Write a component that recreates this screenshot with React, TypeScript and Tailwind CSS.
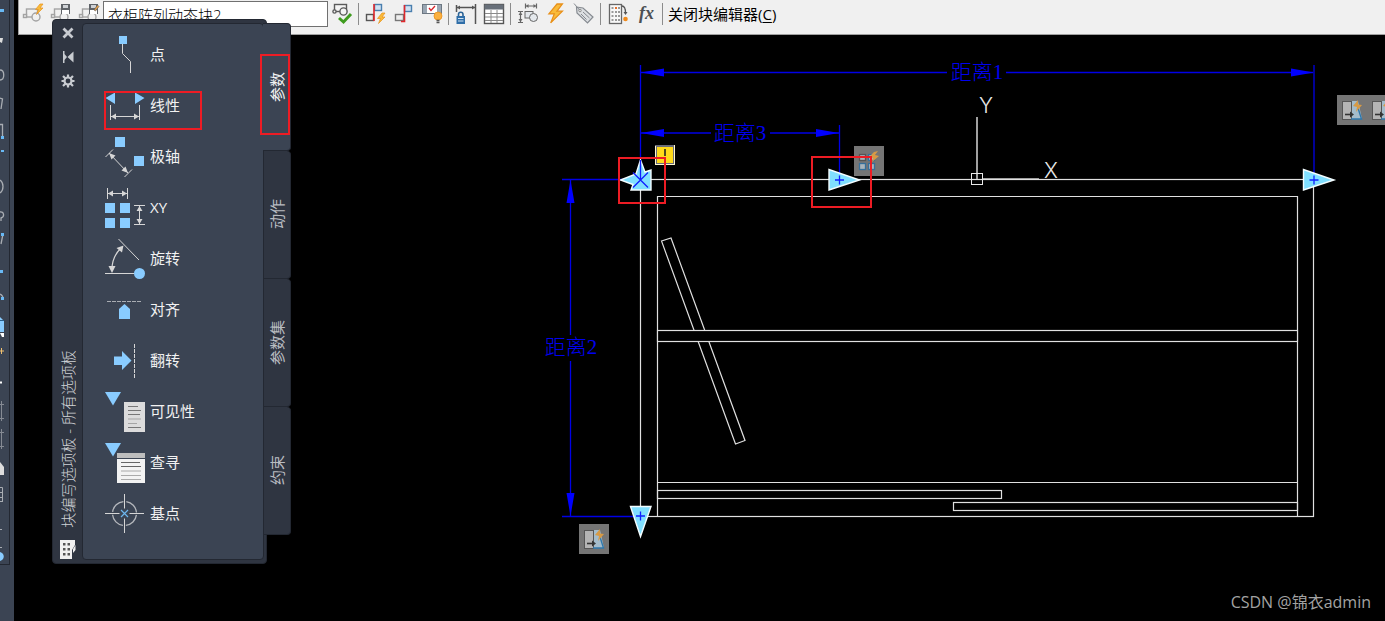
import { useState, type ReactNode } from "react";

const TABS = ["参数", "动作", "参数集", "约束"];

const LINE = "#d6d6d6";
const GRIP = "#89ccff";

function Bolt({ x, y, scale = 1 }: { x: number; y: number; scale?: number }) {
  return (
    <path
      transform={`translate(${x} ${y}) scale(${scale})`}
      d="M5 0 L0.5 5.5 L3.5 5.5 L1.5 10.5 L8 4 L5 4 L8 0 Z"
      fill="#f9bb3a"
      stroke="#e8901a"
      strokeWidth="0.7"
    />
  );
}

function BlockShape() {
  return (
    <g fill="#f0f0f0" stroke="#a3a3a3" strokeWidth="1.4">
      <rect x="5.5" y="8" width="11" height="8" />
      <rect x="2.5" y="13.5" width="3" height="3" />
      <circle cx="15" cy="16" r="4" />
    </g>
  );
}

function Floppy() {
  return (
    <g>
      <rect x="12" y="3" width="9" height="10" fill="#5f6368" />
      <rect x="14" y="4" width="5" height="3" fill="#cfd2d6" />
      <rect x="13" y="9" width="7" height="4" fill="#fff" />
    </g>
  );
}

// Toolbar buttons, split into groups by separators
const TOOLS: { label: string; art: ReactNode }[][] = [
  [
    {
      label: "编辑块",
      art: (
        <>
          <BlockShape />
          <Bolt x={14} y={3} />
        </>
      ),
    },
    {
      label: "保存块",
      art: (
        <>
          <BlockShape />
          <Floppy />
        </>
      ),
    },
    {
      label: "块另存为",
      art: (
        <>
          <BlockShape />
          <Floppy />
          <path d="M17 9 L20.5 4 L22 5.5 L18.5 10 Z" fill="#e6a04a" stroke="#5a5a5a" strokeWidth="0.6" />
        </>
      ),
    },
  ],
  [
    {
      label: "测试块",
      art: (
        <>
          <g fill="#f4f4f4" stroke="#5a5a5a" strokeWidth="1.4">
            <rect x="4.5" y="3.5" width="12" height="7" />
            <circle cx="13.5" cy="10.5" r="3.6" />
            <circle cx="4.5" cy="10.5" r="1.6" />
          </g>
          <path d="M9 17 L13.5 21 L21 13" fill="none" stroke="#3f9c1f" strokeWidth="3" />
        </>
      ),
    },
  ],
  [
    {
      label: "自动约束",
      art: (
        <>
          <rect x="2.5" y="13.500" width="7" height="6" fill="#eee" stroke="#555" strokeWidth="1.4" />
          <rect x="10.5" y="3.500" width="7" height="6" fill="#cfe2f3" stroke="#4a7fae" strokeWidth="1.4" />
          <path d="M10 3 V20" stroke="#e0262b" strokeWidth="1.6" />
          <Bolt x={13} y={12} />
        </>
      ),
    },
    {
      label: "几何约束",
      art: (
        <>
          <rect x="3.5" y="13.5" width="8" height="6" fill="#eee" stroke="#777" strokeWidth="1.4" />
          <rect x="12.5" y="4.5" width="7" height="6" fill="#cfe2f3" stroke="#4a7fae" strokeWidth="1.4" />
          <path d="M12.5 4 V20.5 H9" fill="none" stroke="#e0262b" strokeWidth="1.6" />
        </>
      ),
    },
    {
      label: "显示约束",
      art: (
        <>
          <rect x="2.5" y="3.5" width="19" height="9" fill="#9aa6b3" stroke="#6c7782" />
          <rect x="7" y="4" width="10" height="8" fill="#fff" />
          <path d="M9 7 L11 9.5 L15 5" fill="none" stroke="#d8232a" strokeWidth="1.3" />
          <circle cx="18" cy="15" r="4" fill="#fbb040" stroke="#e8901a" strokeWidth="0.8" />
          <path d="M16.5 19.5 H19.5 M16.5 21.500 H19.5" stroke="#555" strokeWidth="1.4" />
        </>
      ),
    },
  ],
  [
    {
      label: "块约束参数",
      art: (
        <>
          <path d="M2.5 4 V11 M21.5 3 V23 M3 6.5 H21" stroke="#555" strokeWidth="1.5" fill="none" />
          <path d="M3 6.5 L6 4.5 V8.5 Z M21 6.5 L18 4.5 V8.5 Z" fill="#555" />
          <path d="M4.5 15 V13.5 A2.2 2.2 0 0 1 9 13.5 V15" fill="none" stroke="#2b6396" strokeWidth="1.6" />
          <rect x="2.5" y="15" width="8.5" height="8" fill="#2f6ea8" />
          <path d="M4 17.5 H9.5 M4 20 H9.5" stroke="#cfe2f3" />
        </>
      ),
    },
    {
      label: "块表",
      art: (
        <>
          <rect x="2.5" y="3.5" width="19" height="19" fill="#fff" stroke="#555" strokeWidth="1.4" />
          <rect x="2.5" y="3.5" width="19" height="5" fill="#68707a" />
          <path d="M3 12.5 H21 M3 16 H21 M3 19.5 H21 M9 9 V22 M15 9 V22" stroke="#8a8a8a" />
        </>
      ),
    },
  ],
  [
    {
      label: "参数",
      art: (
        <>
          <g stroke="#666" fill="none">
            <path d="M9.5 2.5 V7.5 M20.5 2.5 V7.5 M10 5 H20 M2 10.5 H7 M2 21.5 H7 M4.5 11 V21" strokeWidth="1.2" />
            <rect x="9" y="10.5" width="8" height="6.5" fill="#e4e8ec" />
            <circle cx="17.5" cy="16.500" r="4" fill="#e4e8ec" />
          </g>
          <path d="M10 5 L12.5 3 V7 Z M20 5 L17.5 3 V7 Z M4.5 11 L2.5 14 H6.5 Z M4.5 21 L2.5 18 H6.5 Z" fill="#666" />
        </>
      ),
    },
    { label: "动作", art: <Bolt x={4} y={3} scale={1.8} /> },
    {
      label: "定义属性",
      art: (
        <>
          <path d="M4.500 6 L11 7 L21 16 L15.500 22 L5 12 Z" fill="#dcdfe2" stroke="#858a90" strokeWidth="1.2" />
          <circle cx="8" cy="9.500" r="1.3" fill="#fff" stroke="#777" strokeWidth="0.8" />
          <path d="M2 2.500 L8 9.500 M11 11 L17.500 17 M9 13 L14.500 18.500" stroke="#858a90" fill="none" />
        </>
      ),
    },
  ],
  [
    {
      label: "可见性状态",
      art: (
        <>
          <rect x="3.5" y="3.5" width="12" height="19" fill="#f8f8f8" stroke="#666" strokeWidth="1.3" />
          <rect x="9" y="6" width="2" height="2" fill="#e8702a" />
          <path
            d="M5.5 7 H7.5 M12 7 H14 M5.5 11 H7.5 M9 11 H11 M12 11 H14 M5.5 15 H7.5 M9 15 H11 M12 15 H14 M5.5 19 H7.5 M9 19 H11 M12 19 H14"
            stroke="#999"
            strokeWidth="2"
          />
          <path d="M16 5 C19 5 19.5 8 19.5 12" fill="none" stroke="#555" strokeWidth="1.3" />
          <path d="M17.500 11 H21.500 L19.5 14 Z" fill="#555" />
          <circle cx="19.5" cy="18" r="2.300" fill="#f08a1c" />
        </>
      ),
    },
    {
      label: "参数管理器",
      art: (
        <text x="5" y="18" fontSize="18" fontStyle="italic" fontWeight="700" fontFamily="Liberation Serif, serif" fill="#4b4f54">
          fx
        </text>
      ),
    },
  ],
];

function ToolGroup({ group }: { group: number }) {
  return (
    <div className="flex">
      {TOOLS[group].map(({ label, art }) => (
        <button key={label} type="button" aria-label={label} className="flex w-7 shrink-0 justify-center">
          <svg width="24" height="24" viewBox="0 0 24 24">
            {art}
          </svg>
        </button>
      ))}
    </div>
  );
}

function Separator() {
  return <div className="mt-[2px] mr-[3px] ml-[2px] h-[22px] w-px shrink-0 bg-[#8c8c8c]" />;
}

function Toolbar() {
  return (
    <header className="ml-1 flex h-[35px] items-start overflow-hidden border-b border-l border-[#a0a0a0] bg-[#f0f0f0] pt-px">
      <ToolGroup group={0} />
      <input
        aria-label="块名称"
        defaultValue="衣柜阵列动态块2"
        className="h-[26px] w-[225px] shrink-0 border border-[#707070] bg-white px-1 text-[15px] font-light text-black outline-none"
      />
      <ToolGroup group={1} />
      <Separator />
      <ToolGroup group={2} />
      <Separator />
      <ToolGroup group={3} />
      <Separator />
      <ToolGroup group={4} />
      <Separator />
      <ToolGroup group={5} />
      <Separator />
      <button type="button" className="h-[26px] px-[2px] text-[15px] whitespace-nowrap text-black">
        关闭块编辑器(<span className="underline underline-offset-2">C</span>)
      </button>
    </header>
  );
}

// Parameters listed on the palette, each with a 42x51 drawing
const PARAMETERS: { name: string; art: ReactNode }[] = [
  {
    name: "点",
    art: (
      <>
        <rect x="15" y="7" width="8" height="8" fill={GRIP} />
        <path d="M18.5 15 V24.5 L26.5 32.5 V44" fill="none" stroke={LINE} />
      </>
    ),
  },
  {
    name: "线性",
    art: (
      <>
        <path d="M1.5 18 L11 12.5 V24 Z M40.5 18 L31 12.5 V24 Z" fill={GRIP} />
        <path d="M6.5 25 V40 M35.5 25 V40 M7 36.5 H35" stroke={LINE} />
        <path d="M7 36.5 L12 33.5 V39.5 Z M35 36.5 L30 33.5 V39.5 Z" fill={LINE} />
      </>
    ),
  },
  {
    name: "极轴",
    art: (
      <>
        <rect x="11" y="6" width="10" height="10" fill={GRIP} />
        <rect x="30" y="25" width="10" height="10" fill={GRIP} />
        <path d="M5 22 L24 42 M1.5 26 L9 18.5 M20.5 46 L28 38.5" stroke={LINE} />
        <path d="M5 22 L11.5 24.5 L7.5 28.5 Z M24 42 L17.5 39.5 L21.5 35.5 Z" fill={LINE} />
      </>
    ),
  },
  {
    name: "XY",
    art: (
      <>
        <path d="M3.5 6 V17 M23.5 6 V17 M4 11.5 H23 M30 23.5 H41 M30 42.5 H41 M35.5 24 V42" stroke={LINE} />
        <path
          d="M4 11.5 L9 8.5 V14.5 Z M23 11.5 L18 8.5 V14.5 Z M35.5 24 L32.5 29 H38.5 Z M35.5 42 L32.5 37 H38.5 Z"
          fill={LINE}
        />
        <path d="M1 21 h10 v10 h-10 Z M16 21 h10 v10 h-10 Z M1 36 h10 v10 h-10 Z M16 36 h10 v10 h-10 Z" fill={GRIP} />
      </>
    ),
  },
  {
    name: "旋转",
    art: (
      <>
        <path d="M14.5 6 L35 27 M1 40.5 H30" stroke={LINE} />
        <path d="M8 36 C8 28 11 21 17 15" fill="none" stroke={LINE} strokeWidth="1.2" />
        <path d="M8 40 L4.5 33 H11.5 Z M19.5 12.5 L18 19.5 L12.5 15 Z" fill={LINE} />
        <circle cx="35.5" cy="40.5" r="5.5" fill={GRIP} />
      </>
    ),
  },
  {
    name: "对齐",
    art: (
      <>
        <path d="M3 17.5 H38" stroke="#a9adb3" strokeDasharray="4 1" />
        <path d="M20.5 20 L26 25 V35 H15 V25 Z" fill={GRIP} />
      </>
    ),
  },
  {
    name: "翻转",
    art: (
      <>
        <path d="M10 21.5 H18 V16 L27.5 25.5 L18 35 V30 H10 Z" fill={GRIP} />
        <path d="M30.5 9 V43" stroke={LINE} strokeDasharray="4 1" />
      </>
    ),
  },
  {
    name: "可见性",
    art: (
      <>
        <path d="M1 6 H17 L9 19.5 Z" fill={GRIP} />
        <rect x="20" y="16" width="21" height="30" fill="#dcdcdc" />
        <path d="M24 20.5 H34 M24 24.5 H37 M24 28.5 H36 M24 41.5 H37" stroke="#777" />
        <path d="M24 33 H37 M24 37.5 H33" stroke="#a5a5a5" />
      </>
    ),
  },
  {
    name: "查寻",
    art: (
      <>
        <path d="M1 6 H17 L9 19.5 Z" fill={GRIP} />
        <rect x="13" y="16" width="28" height="30" fill="#f3f3f3" />
        <rect x="13" y="16" width="28" height="5" fill="#bdbdbd" />
        <path d="M13 21.5 H41" stroke="#3b4453" />
        <path d="M17 25.5 H36 M17 29.5 H37" stroke="#666" />
        <path d="M17 34 H37 M17 38.5 H37 M17 42.5 H37" stroke="#aaa" />
      </>
    ),
  },
  {
    name: "基点",
    art: (
      <>
        <circle cx="20.5" cy="25.5" r="12" fill="none" stroke="#b4b7bc" strokeWidth="1.3" strokeDasharray="15.850 3" strokeDashoffset="-1.5" />
        <path d="M1 25.5 H15.5 M25.5 25.5 H40 M20.5 6 V20.5 M20.5 30.5 V45" stroke={LINE} />
        <path d="M17 22 L24 29 M24 22 L17 29" stroke="#6cb6ee" strokeWidth="1.2" />
      </>
    ),
  },
];

function Palette() {
  const [activeTab, setActiveTab] = useState("参数");

  return (
    <section className="absolute top-[19px] left-[52px] flex items-start">
      <div className="flex rounded-[4px] border border-[#232832] bg-[#2f3541] py-[3px] pr-[2px]">
        {/* Title strip */}
        <div className="flex w-[29px] flex-col items-center pt-px">
          <button type="button" aria-label="关闭" className="flex h-[18px] items-center">
            <svg width="14" height="14" viewBox="0 0 14 14" stroke="#c8cbd0" strokeWidth="2.8">
              <path d="M2.5 2.5 L11.5 11.5 M11.5 2.5 L2.5 11.5" />
            </svg>
          </button>
          <button type="button" aria-label="自动隐藏" className="mt-[6px] flex h-[18px] items-center">
            <svg width="14" height="14" viewBox="0 0 14 14" fill="#c8cbd0">
              <path d="M2 1 h1.5 v12 h-1.5 Z M3.5 4 L6 7 L3.5 10 Z M12.500 1.500 V12.500 L6.500 7 Z" />
            </svg>
          </button>
          <button type="button" aria-label="特性" className="mt-[6px] flex h-[18px] items-center">
            <svg width="14" height="14" viewBox="0 0 14 14" fill="none" stroke="#c8cbd0">
              <circle cx="7" cy="7" r="3.5" strokeWidth="2.2" />
              <path
                d="M7 0.5 V3.500 M7 10.500 V13.500 M0.500 7 H3.500 M10.500 7 H13.500 M2 2 L4.500 4.500 M9.500 9.500 L12 12 M12 2 L9.500 4.500 M4.500 9.500 L2 12"
                strokeWidth="2.2"
              />
            </svg>
          </button>
          <h2 className="mt-auto rotate-180 text-[15px] leading-5 font-light whitespace-nowrap text-[#d0d2d6] [text-orientation:sideways] [writing-mode:vertical-rl]">
            块编写选项板 - 所有选项板
          </h2>
          <svg className="mt-3" width="16" height="20" viewBox="0 0 16 20">
            <path d="M0 0 H15 V5 L12 10 V19 H0 Z" fill="#f0f0f0" />
            <path
              d="M3 3 h2.5 v2.5 h-2.5 Z M7.5 3 h2.5 v2.5 h-2.5 Z M3 8 h2.5 v2.5 h-2.5 Z M7.5 8 h2.5 v2.5 h-2.5 Z M3 13 h2.5 v2.5 h-2.5 Z M7.5 13 h2.5 v2.5 h-2.5 Z"
              fill="#555"
            />
            <path d="M13 9 L15.5 5 V10 L13 13 Z" fill="#f0f0f0" />
          </svg>
        </div>

        <ul className="relative w-[182px] rounded-[4px] border border-[#232832] bg-[#3b4453] pt-[5px] pb-5 pl-[21px]">
          {PARAMETERS.map(({ name, art }) => (
            <li key={name}>
              <button type="button" className="flex h-[51px] items-center gap-1 text-[15px] text-[#f2f2f2]">
                <svg width="42" height="51" viewBox="0 0 42 51">
                  {art}
                </svg>
                {name}
              </button>
            </li>
          ))}
          <li aria-hidden="true" className="absolute top-[67px] left-[21px] h-[39px] w-[98px] border-2 border-[#ed1c24]" />
        </ul>
      </div>

      {/* Category tabs down the right edge */}
      <div role="tablist" className="relative mt-1 -ml-[4px]">
        {TABS.map((tab) => (
          <button
            key={tab}
            type="button"
            role="tab"
            aria-selected={activeTab === tab}
            onClick={() => setActiveTab(tab)}
            className={`flex h-32 w-7 items-center justify-center rounded-r-[4px] border-r border-b border-[#232832] text-[15px] first:border-t ${
              activeTab === tab ? "bg-[#3b4453] text-[#f2f2f2]" : "border-l bg-[#2f3541] text-[#b9bcc1]"
            }`}
          >
            <span className="rotate-180 leading-5 [text-orientation:sideways] [writing-mode:vertical-rl]">{tab}</span>
          </button>
        ))}
        <div aria-hidden="true" className="absolute top-[31px] -left-[3px] h-[81px] w-[30px] border-2 border-[#ed1c24]" />
      </div>
    </section>
  );
}

// Sliver of the docked tool column
function DockedTools() {
  return (
    <aside className="w-[14px] shrink-0 bg-[#3b4453]">
      <div className="h-[565px] w-[10px] border-r border-b border-[#232832]">
        <svg width="5" height="564" viewBox="0 0 5 564" fill="none" stroke="#a9adb3">
          <path d="M0 38 H3 L2 43 L0 42 Z" fill="#ddd" stroke="none" />
          <path
            d="M0 70 C5 70 5 80 0 80 M0 98 L2.5 99 L1 109 M0 124.5 H2.5 V136 M0 180 C4 183 4 190 0 193 M0 212 C4 211 5 217 1 218 V221 M3 234 L1 244 M0 294 C3 295 3 298 3 299"
            strokeWidth="1.3"
          />
          <path
            d="M0 9 h4 v3 h-4 Z M1 136 h3 v3 h-3 Z M1 150 h3 v2 h-3 Z M1 233 h3 v3 h-3 Z M0 270 h3 v3 h-3 Z M1 297 h3 v3 h-3 Z"
            fill="#69b9f5"
            stroke="none"
          />
          <path d="M0 317 L4 321 V332 H0 Z" fill={GRIP} stroke="none" />
          <path d="M0 320.5 H4" stroke="#2a5f8c" />
          <path d="M0 333 H4 V337 L2 337 Z" fill="#fff" stroke="none" />
          <path d="M0 351 H4 M1.5 348 V354" stroke="#f0c070" />
          <path d="M0 382.5 H2" stroke="#fff" strokeWidth="2" />
          <path d="M1.5 401 V421 M0 404.5 H4 M0 418.5 H4 M1.5 429 V449 M0 432.5 H4 M0 446.5 H4" stroke="#858a93" />
          <path d="M0 462 L4 467 V475 H0 Z" fill="#ddd" stroke="none" />
          <path d="M0 487.5 H2.5 V502 M0 492.5 H2 M0 497.5 H2 M0 501.5 H2 M0 529.5 H2 M0 547.5 H2" />
          <path d="M0 552 C5 553 5 560 0 561 Z" fill={GRIP} stroke="none" />
        </svg>
      </div>
    </aside>
  );
}

function ActionTile({ x, y }: { x: number; y: number }) {
  return (
    <g transform={`translate(${x} ${y})`}>
      <rect width="30" height="30" fill="#757575" />
      <rect x="5.5" y="6.5" width="9" height="18" fill="#b4b4b4" stroke="#555" />
      <path d="M15 6 H21 L25 24 H15 Z" fill="#a4bccb" />
      <path d="M21 13 L24.5 24 H14" fill="none" stroke="#2f78ad" strokeWidth="1.4" />
      <path d="M8 19.5 H14" stroke="#333" strokeWidth="1.6" />
      <path d="M13 16.5 L17 19.5 L13 22.5 Z" fill="#333" />
      <path d="M21 5 L16 11 L20 12 L19 17 L25 10 L21 9.5 Z" fill="#d79a45" />
    </g>
  );
}

function Drawing() {
  return (
    <svg className="block h-full w-full" viewBox="14 35 1371 586" preserveAspectRatio="xMinYMin meet" fill="none">
      {/* Wardrobe */}
      <g stroke="#e0e0e0" strokeWidth="1.2">
        <rect x="640.5" y="179.5" width="673" height="337" />
        <path d="M657.5 516 V196.5 H1297.5 V516 M657.5 482.5 H1297.5" />
        <path d="M661.5 241 L671 238 L745 440.5 L735.5 444 Z" />
        <rect x="657.5" y="330.5" width="640" height="11" fill="#000" />
        <rect x="657.5" y="490.5" width="344" height="8" />
        <rect x="953.5" y="502.5" width="344" height="8" />
      </g>

      {/* UCS icon */}
      <g stroke="#a0a0a0">
        <path d="M977 117 V179" strokeWidth="2" />
        <path d="M983 178.5 H1039" />
        <rect x="971.5" y="173.5" width="11" height="11" stroke="#e8e8e8" />
      </g>
      <g fill="#e8e8e8" fontSize="21" fontFamily="Inter, sans-serif" fontWeight="300" textAnchor="middle">
        <text x="986" y="113">
          Y
        </text>
        <text x="1051" y="178">
          X
        </text>
      </g>

      {/* Dimensions */}
      <g stroke="#0000e6" strokeWidth="1.3">
        <path d="M640.5 65 V179 M1314 65 V179 M839.5 125 V179 M562 179.5 H640 M562 516.5 H640" />
        <path d="M641 72.5 H947 M1006 72.5 H1313 M641 133 H711 M770 133 H839 M570.5 180 V335 M570.5 361 V516" />
      </g>
      <path
        d="M641 72.5 L664 68.5 V76.5 Z M1314 72.5 L1291 68.5 V76.5 Z M641 133 L664 129 V137 Z M839 133 L816 129 V137 Z M570.5 180 L566.5 203 H574.5 Z M570.5 516 L566.5 493 H574.5 Z"
        fill="#0000ff"
      />
      <g
        fill="#0000f0"
        fontSize="21"
        fontFamily="'Liberation Serif', 'Noto Sans CJK SC', sans-serif"
        fontWeight="300"
        textAnchor="middle"
      >
        <text x="977" y="79">
          距离1
        </text>
        <text x="740" y="140">
          距离3
        </text>
        <text x="571" y="354">
          距离2
        </text>
      </g>

      {/* Action badges */}
      <ActionTile x={579} y={524} />
      <ActionTile x={1337} y={95} />
      <ActionTile x={1367} y={95} />
      <g>
        <rect x="854" y="146" width="30" height="30" fill="#757575" />
        <g fill="#a9b4bb" strokeWidth="1.3">
          <rect x="859.5" y="154.5" width="6" height="6" stroke="#555" />
          <rect x="868.5" y="154.5" width="6" height="6" stroke="#356f9b" />
          <rect x="859.5" y="163.5" width="6" height="6" stroke="#356f9b" />
          <rect x="868.5" y="163.5" width="6" height="6" stroke="#356f9b" />
        </g>
        <path d="M874 152 L869 157 L873 158 L872 162 L879 156 L875 155 L878 151 Z" fill="#d79a45" />
      </g>

      {/* Grips */}
      <g fill="#80dfff" stroke="#f4fdff" strokeWidth="1.4">
        <path d="M829 169.5 V190 L859.5 180 Z" />
        <path d="M1303.5 169.5 V190 L1334 180 Z" />
        <path d="M630.5 506.5 H651 L640.5 536.5 Z" />
        <path d="M640.5 160 L645 172 L651 170 V190 H631 L633 184.5 L620.5 180 L636 174 Z" />
      </g>
      <path
        d="M839.5 175.5 V184.5 M835 180 H844 M1314 175.5 V184.5 M1309.5 180 H1318.5 M640.5 511.5 V520.5 M636 516 H645 M640.5 160 V180 M633 172.5 L648 187.5 M648 172.5 L633 187.5"
        stroke="#0f1fff"
        strokeWidth="1.3"
      />

      {/* Warning marker */}
      <rect x="655" y="145" width="20" height="20" fill="#fdf6c4" />
      <rect x="655" y="145" width="19" height="19" fill="#6a6c78" />
      <rect x="657" y="147" width="16" height="16" fill="#ffd91a" />
      <path d="M655.5 146 V164.5 H674.5 V145" stroke="#fff8cf" />
      <path d="M665 149 V156" stroke="#222" strokeWidth="1.6" />

      {/* Highlights */}
      <g stroke="#ed1c24" strokeWidth="2">
        <rect x="619" y="158" width="46" height="45" />
        <rect x="812" y="157" width="59" height="50" />
      </g>
    </svg>
  );
}

export default function App() {
  return (
    <div className="relative flex h-screen overflow-hidden bg-black font-['Open_Sans','Noto_Sans_CJK_SC',sans-serif] font-normal">
      <DockedTools />
      <div className="flex min-w-0 flex-1 flex-col">
        <Toolbar />
        <main className="relative min-h-0 flex-1">
          <Drawing />
          <p className="absolute right-[14px] bottom-[7px] text-base text-[#a3a3a3]">CSDN @锦衣admin</p>
        </main>
      </div>
      <Palette />
    </div>
  );
}
